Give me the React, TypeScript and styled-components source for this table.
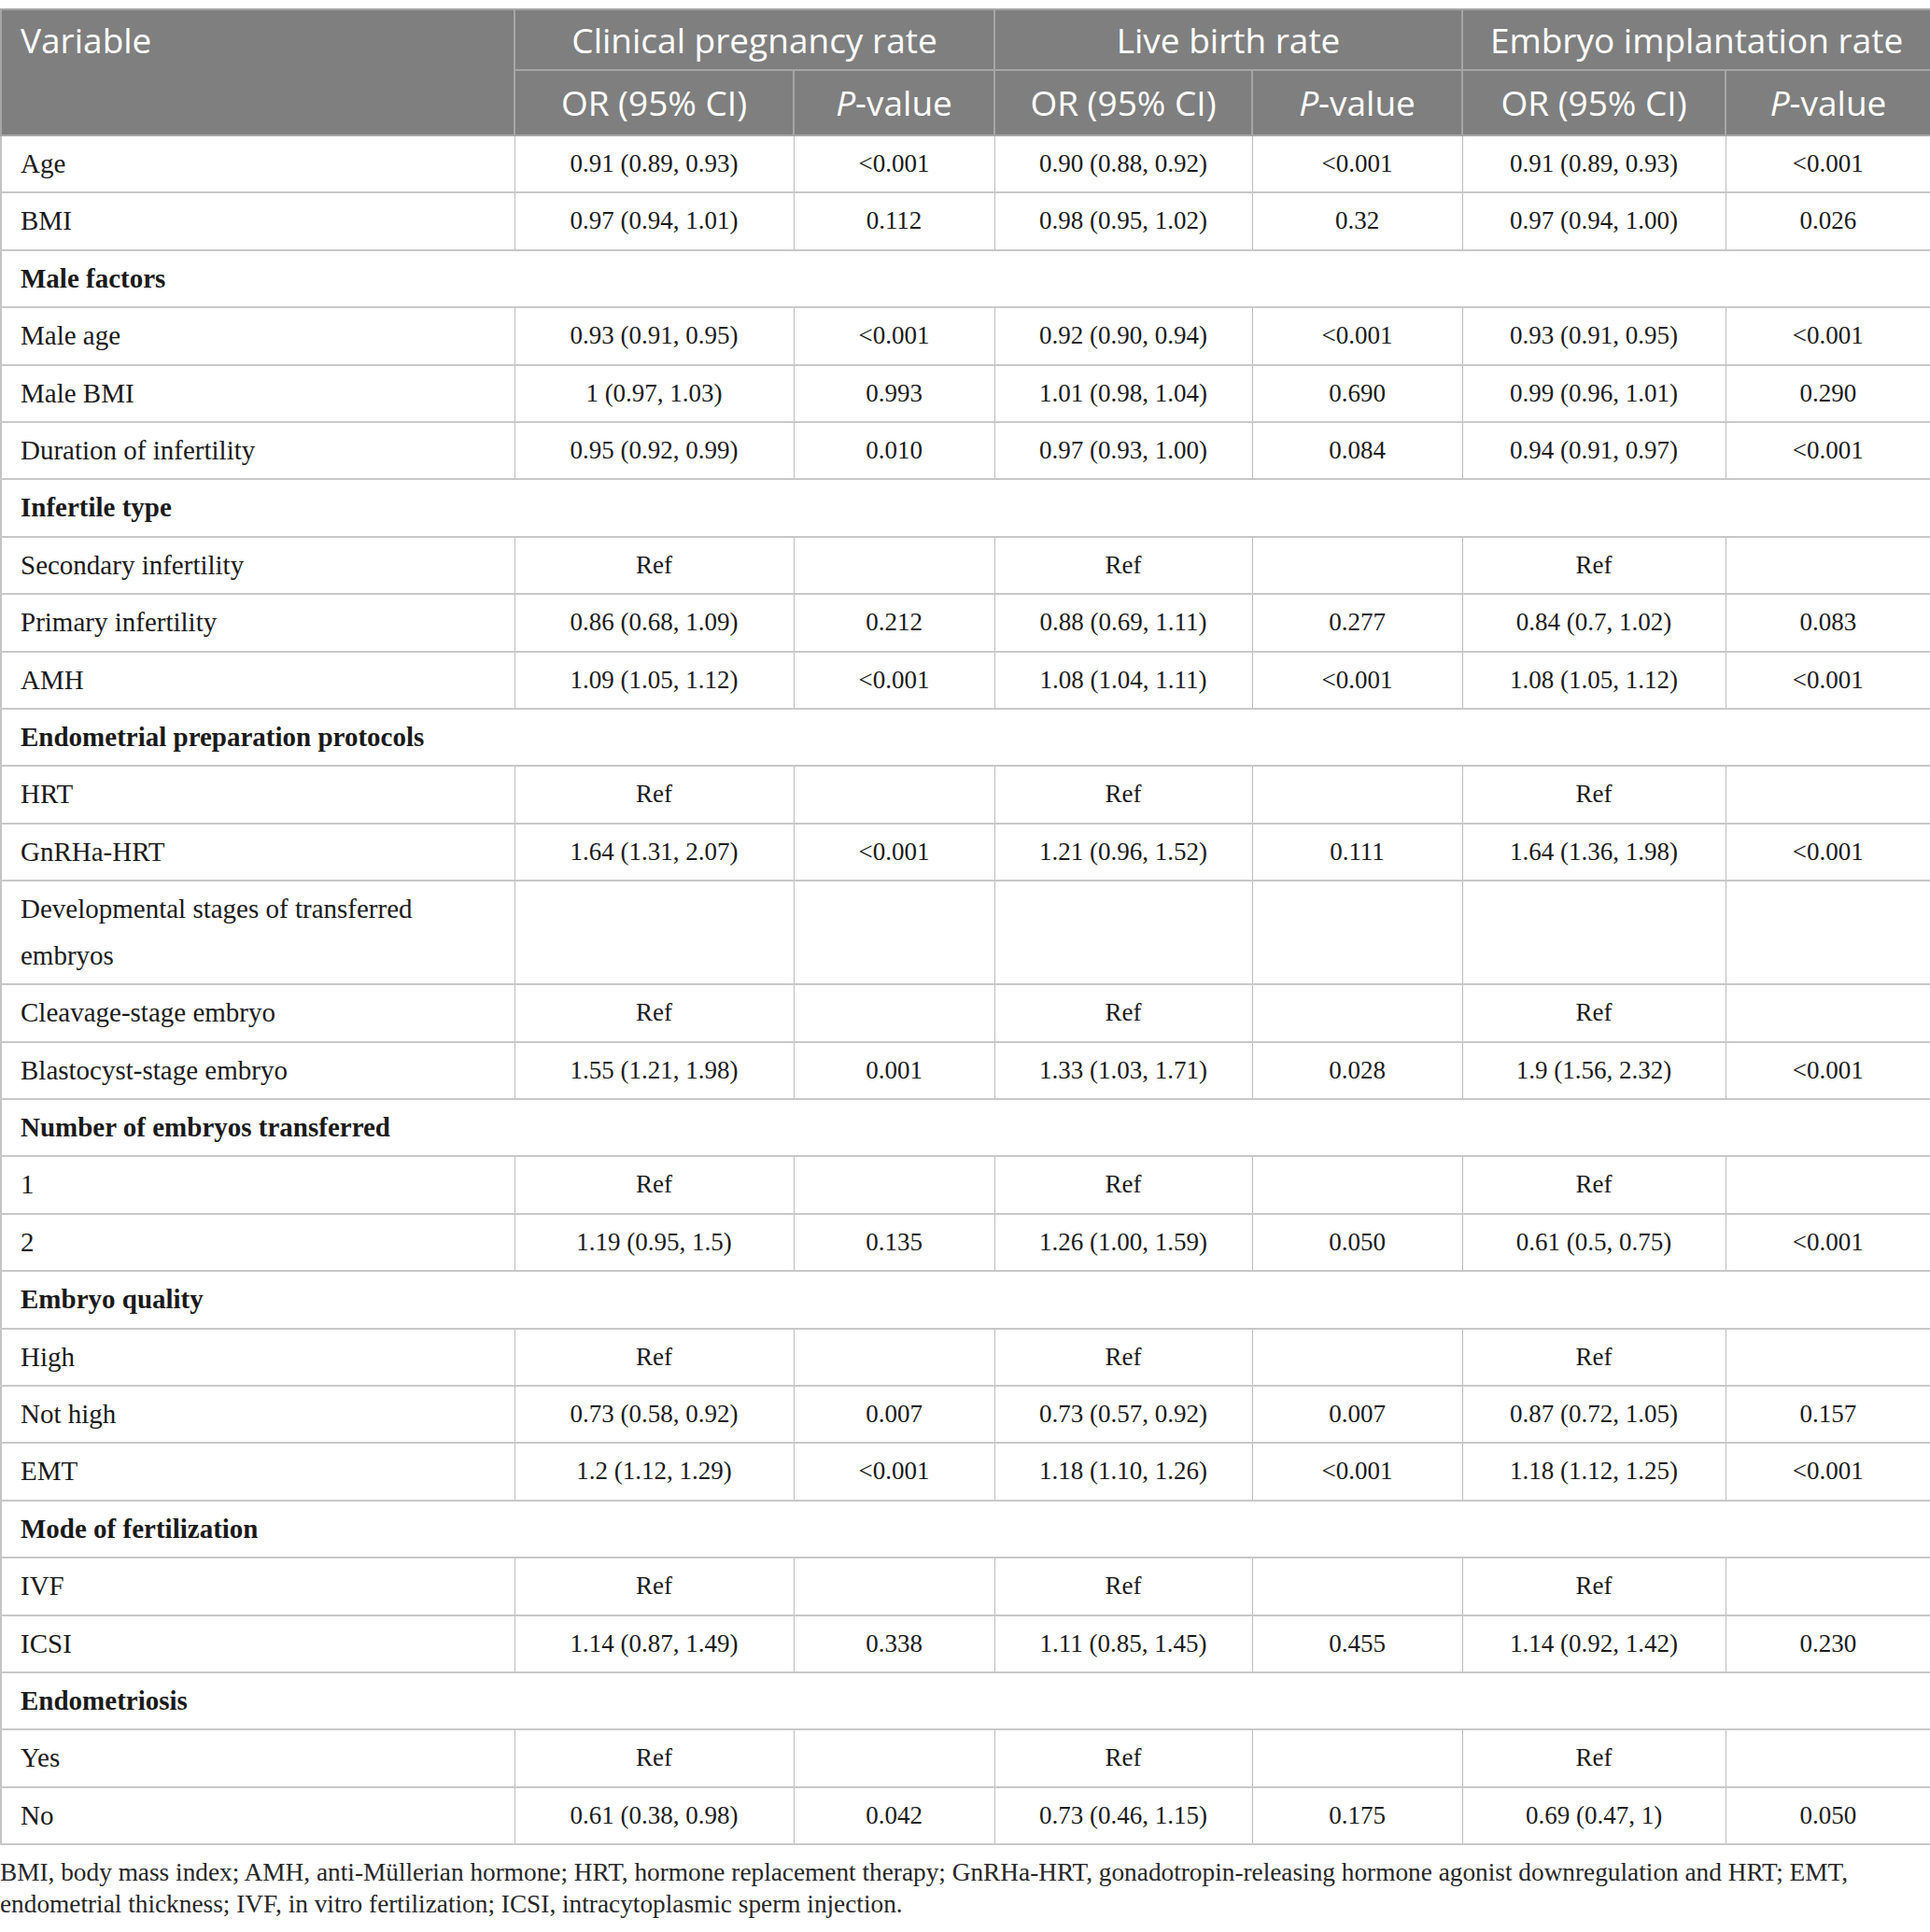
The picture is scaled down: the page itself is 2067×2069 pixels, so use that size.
import React from "react";
import styled, { createGlobalStyle } from "styled-components";

const GlobalStyle = createGlobalStyle`
  html, body {
    margin: 0;
    padding: 0;
    background: #ffffff;
  }
`;

const Page = styled.div`
  width: 2067px;
  padding-top: 9px;
  font-family: "Liberation Serif", "Times New Roman", serif;
  color: #1a1a1a;
`;

const Table = styled.table`
  width: 2067px;
  table-layout: fixed;
  border-collapse: collapse;
  border: 2px solid #c4c4c4;
`;

const HeadRow = styled.tr<{ $h: number }>`
  height: ${(p) => p.$h}px;
  background: #7f7f7f;
`;

const HeadCell = styled.th<{ $align?: string; $top?: boolean }>`
  font-family: "Open Sans", "Noto Sans", sans-serif;
  font-weight: 400;
  font-size: 37px;
  color: #ffffff;
  text-align: ${(p) => p.$align || "center"};
  vertical-align: ${(p) => (p.$top ? "top" : "middle")};
  padding: ${(p) => (p.$top ? "11px 20px 0" : "0 16px")};
  border: 2px solid #a6a6a6;
  white-space: nowrap;
  line-height: 42px;
`;

const Row = styled.tr``;

const Cell = styled.td<{ $left?: boolean }>`
  font-size: ${(p) => (p.$left ? 29 : 27)}px;
  line-height: 49.4px;
  padding: 5px 20px;
  text-align: ${(p) => (p.$left ? "left" : "center")};
  vertical-align: middle;
  border-top: 2px solid #c8c8c8;
  border-bottom: 2px solid #c8c8c8;
  border-left: 1px solid #bdbdbd;
  border-right: 1px solid #bdbdbd;
  white-space: nowrap;
`;

const SectionCell = styled(Cell)`
  font-weight: 700;
  text-align: left;
`;

const Footnote = styled.p`
  margin: 12px 0 0;
  font-size: 27.3px;
  line-height: 34px;
  color: #262626;
`;

type DataRow = {
  label: React.ReactNode;
  values?: string[];
  section?: boolean;
};

const REF = ["Ref", "", "Ref", "", "Ref", ""];

const rows: DataRow[] = [
  { label: "Age", values: ["0.91 (0.89, 0.93)", "<0.001", "0.90 (0.88, 0.92)", "<0.001", "0.91 (0.89, 0.93)", "<0.001"] },
  { label: "BMI", values: ["0.97 (0.94, 1.01)", "0.112", "0.98 (0.95, 1.02)", "0.32", "0.97 (0.94, 1.00)", "0.026"] },
  { label: "Male factors", section: true },
  { label: "Male age", values: ["0.93 (0.91, 0.95)", "<0.001", "0.92 (0.90, 0.94)", "<0.001", "0.93 (0.91, 0.95)", "<0.001"] },
  { label: "Male BMI", values: ["1 (0.97, 1.03)", "0.993", "1.01 (0.98, 1.04)", "0.690", "0.99 (0.96, 1.01)", "0.290"] },
  { label: "Duration of infertility", values: ["0.95 (0.92, 0.99)", "0.010", "0.97 (0.93, 1.00)", "0.084", "0.94 (0.91, 0.97)", "<0.001"] },
  { label: "Infertile type", section: true },
  { label: "Secondary infertility", values: REF },
  { label: "Primary infertility", values: ["0.86 (0.68, 1.09)", "0.212", "0.88 (0.69, 1.11)", "0.277", "0.84 (0.7, 1.02)", "0.083"] },
  { label: "AMH", values: ["1.09 (1.05, 1.12)", "<0.001", "1.08 (1.04, 1.11)", "<0.001", "1.08 (1.05, 1.12)", "<0.001"] },
  { label: "Endometrial preparation protocols", section: true },
  { label: "HRT", values: REF },
  { label: "GnRHa-HRT", values: ["1.64 (1.31, 2.07)", "<0.001", "1.21 (0.96, 1.52)", "0.111", "1.64 (1.36, 1.98)", "<0.001"] },
  {
    label: (
      <>
        Developmental stages of transferred
        <br />
        embryos
      </>
    ),
    values: ["", "", "", "", "", ""],
  },
  { label: "Cleavage-stage embryo", values: REF },
  { label: "Blastocyst-stage embryo", values: ["1.55 (1.21, 1.98)", "0.001", "1.33 (1.03, 1.71)", "0.028", "1.9 (1.56, 2.32)", "<0.001"] },
  { label: "Number of embryos transferred", section: true },
  { label: "1", values: REF },
  { label: "2", values: ["1.19 (0.95, 1.5)", "0.135", "1.26 (1.00, 1.59)", "0.050", "0.61 (0.5, 0.75)", "<0.001"] },
  { label: "Embryo quality", section: true },
  { label: "High", values: REF },
  { label: "Not high", values: ["0.73 (0.58, 0.92)", "0.007", "0.73 (0.57, 0.92)", "0.007", "0.87 (0.72, 1.05)", "0.157"] },
  { label: "EMT", values: ["1.2 (1.12, 1.29)", "<0.001", "1.18 (1.10, 1.26)", "<0.001", "1.18 (1.12, 1.25)", "<0.001"] },
  { label: "Mode of fertilization", section: true },
  { label: "IVF", values: REF },
  { label: "ICSI", values: ["1.14 (0.87, 1.49)", "0.338", "1.11 (0.85, 1.45)", "0.455", "1.14 (0.92, 1.42)", "0.230"] },
  { label: "Endometriosis", section: true },
  { label: "Yes", values: REF },
  { label: "No", values: ["0.61 (0.38, 0.98)", "0.042", "0.73 (0.46, 1.15)", "0.175", "0.69 (0.47, 1)", "0.050"] },
];

const widths = [550, 299, 215, 276, 225, 282, 220];

const PValue = () => (
  <>
    <i>P</i>-value
  </>
);

const App = () => {
  return (
    <Page>
      <GlobalStyle />
      <Table>
        <colgroup>
          {widths.map((w, i) => (
            <col key={i} style={{ width: w }} />
          ))}
        </colgroup>
        <thead>
          <HeadRow $h={65}>
            <HeadCell rowSpan={2} $align="left" $top>
              Variable
            </HeadCell>
            <HeadCell colSpan={2}>Clinical pregnancy rate</HeadCell>
            <HeadCell colSpan={2}>Live birth rate</HeadCell>
            <HeadCell colSpan={2}>Embryo implantation rate</HeadCell>
          </HeadRow>
          <HeadRow $h={70}>
            <HeadCell>OR (95% CI)</HeadCell>
            <HeadCell>
              <PValue />
            </HeadCell>
            <HeadCell>OR (95% CI)</HeadCell>
            <HeadCell>
              <PValue />
            </HeadCell>
            <HeadCell>OR (95% CI)</HeadCell>
            <HeadCell>
              <PValue />
            </HeadCell>
          </HeadRow>
        </thead>
        <tbody>
          {rows.map((r, i) =>
            r.section ? (
              <Row key={i}>
                <SectionCell colSpan={7} $left>
                  {r.label}
                </SectionCell>
              </Row>
            ) : (
              <Row key={i}>
                <Cell $left>{r.label}</Cell>
                {r.values!.map((v, j) => (
                  <Cell key={j}>{v}</Cell>
                ))}
              </Row>
            )
          )}
        </tbody>
      </Table>
      <Footnote>
        BMI, body mass index; AMH, anti-Müllerian hormone; HRT, hormone replacement therapy; GnRHa-HRT,
        gonadotropin-releasing hormone agonist downregulation and HRT; EMT, endometrial thickness; IVF, in vitro
        fertilization; ICSI, intracytoplasmic sperm injection.
      </Footnote>
    </Page>
  );
};

export default App;
